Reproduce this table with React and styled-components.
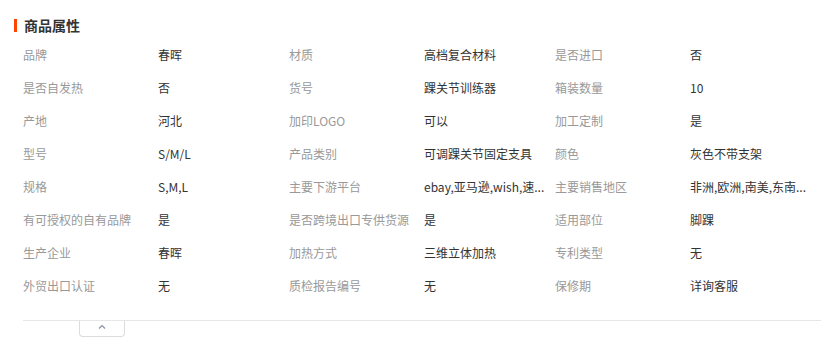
import React from "react";
import styled, { createGlobalStyle } from "styled-components";

const Global = createGlobalStyle`
  html, body { margin: 0; padding: 0; background: #fff; }
  body { font-family: "Noto Sans", "Noto Sans CJK SC", sans-serif; }
`;

const Wrapper = styled.section`
  padding: 15px 3px 0 14px;
  width: 824px;
  box-sizing: border-box;
`;

const Title = styled.h2`
  margin: 0;
  display: flex;
  align-items: center;
  gap: 7px;
  height: 20px;
  font-size: 14px;
  font-weight: 700;
  color: #333;
  font-family: "Noto Sans CJK SC", sans-serif;
  &::before {
    content: "";
    width: 3px;
    height: 13px;
    background: #ff4400;
  }
`;

const Body = styled.div`
  margin: 3px 0 0 9px;
`;

const Grid = styled.dl`
  margin: 0;
  display: grid;
  grid-template-columns: repeat(3, 135px 131px);
  grid-auto-rows: 33px;
  align-items: center;
  font-size: 12px;
  font-family: "Noto Sans CJK SC", sans-serif;
`;

const Label = styled.dt`
  color: #999;
  white-space: nowrap;
`;

const Value = styled.dd`
  margin: 0;
  color: #333;
  white-space: nowrap;
`;

const Footer = styled.div`
  margin-top: 18px;
  border-top: 1px solid #e6e6e6;
`;

const Toggle = styled.button`
  display: flex;
  align-items: flex-start;
  justify-content: center;
  margin-left: 56px;
  width: 46px;
  height: 16px;
  padding: 3px 0 0;
  background: #fff;
  border: 1px solid #dcdcdc;
  border-top: none;
  border-radius: 0 0 4px 4px;
  cursor: pointer;
`;

const rows = [
  ["品牌", "春晖", "材质", "高档复合材料", "是否进口", "否"],
  ["是否自发热", "否", "货号", "踝关节训练器", "箱装数量", "10"],
  ["产地", "河北", "加印LOGO", "可以", "加工定制", "是"],
  ["型号", "S/M/L", "产品类别", "可调踝关节固定支具", "颜色", "灰色不带支架"],
  ["规格", "S,M,L", "主要下游平台", "ebay,亚马逊,wish,速...", "主要销售地区", "非洲,欧洲,南美,东南..."],
  ["有可授权的自有品牌", "是", "是否跨境出口专供货源", "是", "适用部位", "脚踝"],
  ["生产企业", "春晖", "加热方式", "三维立体加热", "专利类型", "无"],
  ["外贸出口认证", "无", "质检报告编号", "无", "保修期", "详询客服"],
];

export default function App() {
  return (
    <>
      <Global />
      <Wrapper>
        <Title>商品属性</Title>
        <Body>
          <Grid>
            {rows.flatMap((r, i) =>
              [0, 2, 4].flatMap((j) => [
                <Label key={`l${i}-${j}`}>{r[j]}</Label>,
                <Value key={`v${i}-${j}`}>{r[j + 1]}</Value>,
              ])
            )}
          </Grid>
          <Footer>
            <Toggle aria-label="收起">
              <svg width="8" height="5" viewBox="0 0 8 5">
                <path d="M1 4.5 L4 1.5 L7 4.5" fill="none" stroke="#8a8fa8" strokeWidth="1.2" />
              </svg>
            </Toggle>
          </Footer>
        </Body>
      </Wrapper>
    </>
  );
}
